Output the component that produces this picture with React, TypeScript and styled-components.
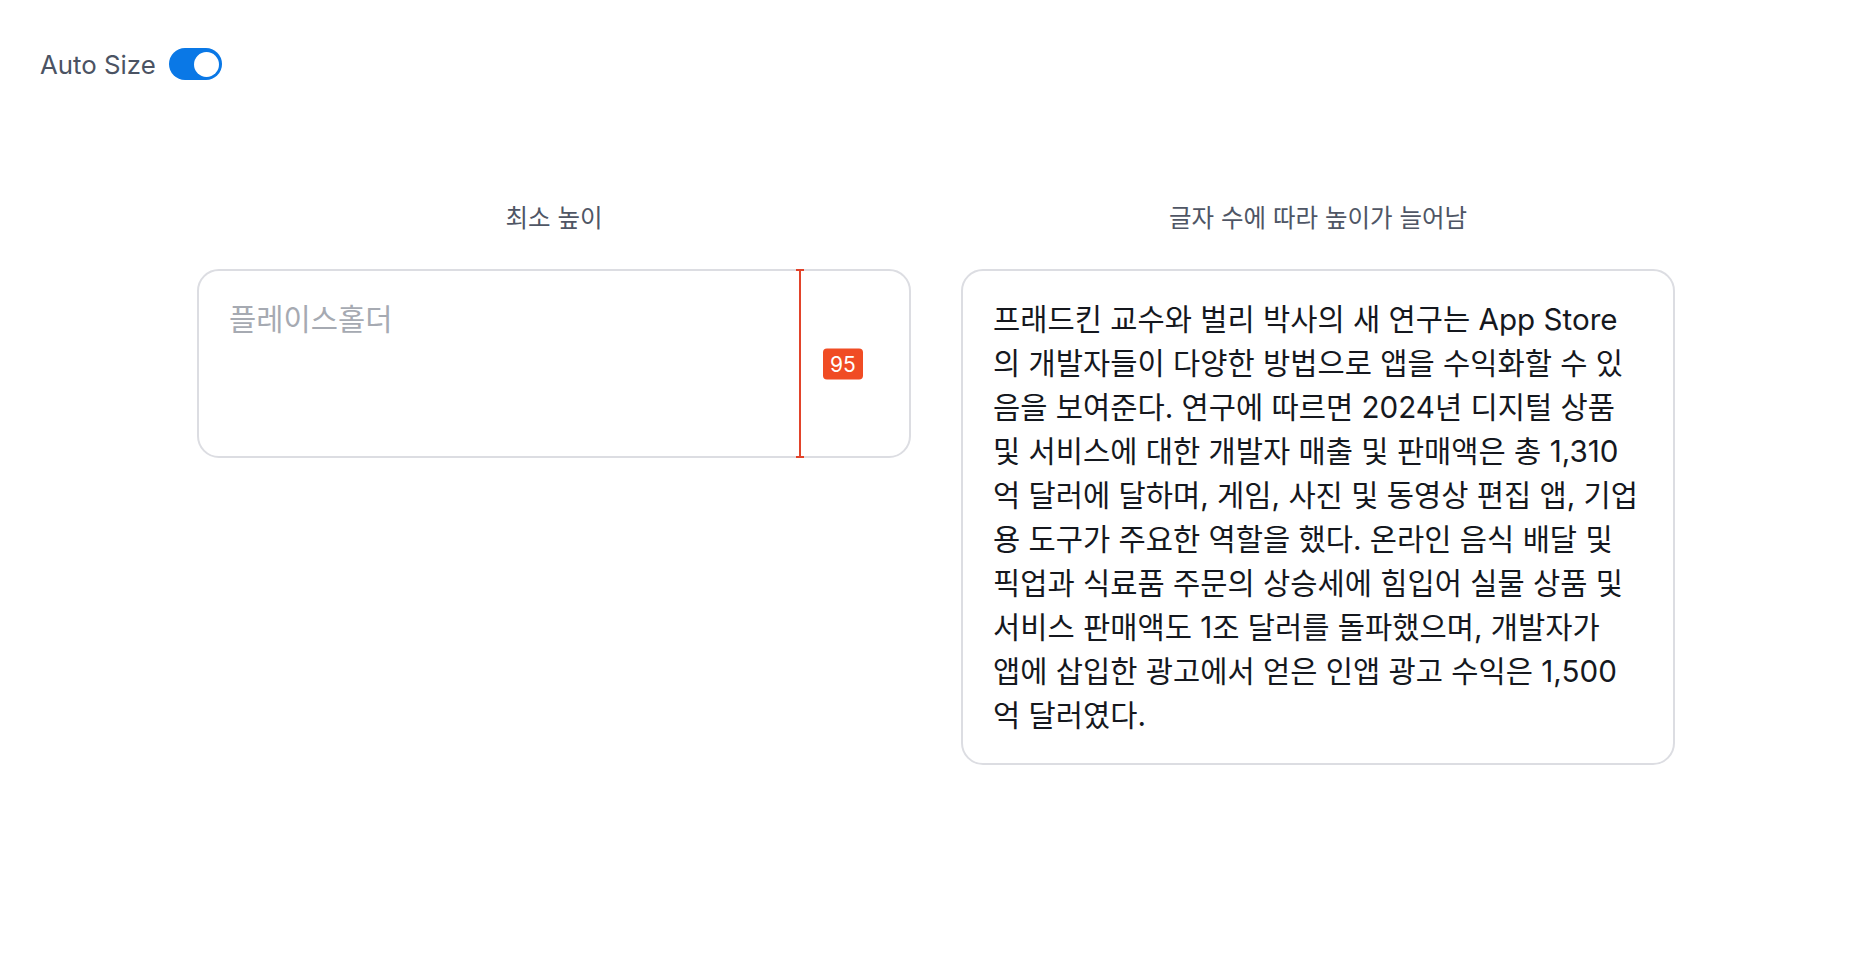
import { useLayoutEffect, useRef, useState } from 'react';
import styled, { createGlobalStyle } from 'styled-components';

const GlobalStyle = createGlobalStyle`
    html, body {
        margin: 0;
        background: #ffffff;
    }
    body {
        font-family: Inter, "Noto Sans CJK KR", sans-serif;
        -webkit-font-smoothing: antialiased;
    }
`;

const ARTICLE = [
    '프래드킨 교수와 벌리 박사의 새 연구는 App Store',
    '의 개발자들이 다양한 방법으로 앱을 수익화할 수 있',
    '음을 보여준다. 연구에 따르면 2024년 디지털 상품',
    '및 서비스에 대한 개발자 매출 및 판매액은 총 1,310',
    '억 달러에 달하며, 게임, 사진 및 동영상 편집 앱, 기업',
    '용 도구가 주요한 역할을 했다. 온라인 음식 배달 및',
    '픽업과 식료품 주문의 상승세에 힘입어 실물 상품 및',
    '서비스 판매액도 1조 달러를 돌파했으며, 개발자가',
    '앱에 삽입한 광고에서 얻은 인앱 광고 수익은 1,500',
    '억 달러였다.',
].join('\n');

const Page = styled.main`
    padding: 48px 40px;
    box-sizing: border-box;
`;

const Toolbar = styled.div`
    display: flex;
    align-items: center;
    gap: 13px;
    height: 32px;
`;

const ToolbarLabel = styled.span`
    font-size: 25.8px;
    color: #4b5363;
`;

const Switch = styled.button<{ $on: boolean }>`
    display: flex;
    justify-content: ${({ $on }) => ($on ? 'flex-end' : 'flex-start')};
    align-items: center;
    width: 53px;
    height: 32px;
    padding: 0 3px;
    border: none;
    border-radius: 16px;
    background: ${({ $on }) => ($on ? '#0a78e6' : '#d1d5db')};
    cursor: pointer;
    box-sizing: border-box;
`;

const Knob = styled.span`
    width: 25px;
    height: 25px;
    border-radius: 50%;
    background: #ffffff;
`;

const Columns = styled.div`
    display: flex;
    justify-content: center;
    gap: 50px;
    margin-top: 123px;
`;

const Column = styled.section`
    display: flex;
    flex-direction: column;
    align-items: center;
    gap: 36px;
    width: 714px;
`;

const Caption = styled.div`
    font-size: 24.5px;
    line-height: 30px;
    color: #4f5665;
`;

const Field = styled.div`
    position: relative;
    width: 100%;
`;

const TextArea = styled.textarea<{ $minHeight: number }>`
    display: block;
    width: 100%;
    min-height: ${({ $minHeight }) => $minHeight}px;
    box-sizing: border-box;
    padding: 26px 30px;
    border: 2px solid #dcdde2;
    border-radius: 22px;
    font-family: Inter, "Noto Sans CJK KR", sans-serif;
    font-size: 29.6px;
    line-height: 44px;
    color: #15181e;
    background: #ffffff;
    resize: none;
    overflow: hidden;
    outline: none;

    &::placeholder {
        color: #a6aab2;
    }
`;

const Ruler = styled.div`
    position: absolute;
    top: 0;
    bottom: 0;
    right: 110px;
    width: 2px;
    background: #e2432a;

    &::before,
    &::after {
        content: '';
        position: absolute;
        left: -3px;
        width: 8px;
        height: 2px;
        background: #e2432a;
    }
    &::before {
        top: 0;
    }
    &::after {
        bottom: 0;
    }
`;

const Badge = styled.span`
    position: absolute;
    top: 50%;
    left: 24px;
    transform: translateY(-50%);
    padding: 0 7px;
    height: 31px;
    border-radius: 4px;
    background: #f04c24;
    color: #ffffff;
    font-size: 21px;
    line-height: 31px;
`;

interface AutoSizeProps {
    minHeight: number;
    placeholder?: string;
    defaultValue?: string;
}

const AutoSizeTextarea = ({ minHeight, placeholder, defaultValue }: AutoSizeProps) => {
    const ref = useRef<HTMLTextAreaElement>(null);

    const fit = () => {
        const el = ref.current;
        if (!el) return;
        el.style.height = 'auto';
        el.style.height = `${el.scrollHeight + 4}px`;
    };

    useLayoutEffect(fit, []);

    return (
        <TextArea
            ref={ref}
            $minHeight={minHeight}
            placeholder={placeholder}
            defaultValue={defaultValue}
            onInput={fit}
        />
    );
};

export default function App() {
    const [autoSize, setAutoSize] = useState(true);

    return (
        <>
            <GlobalStyle />
            <Page>
                <Toolbar>
                    <ToolbarLabel>Auto Size</ToolbarLabel>
                    <Switch
                        role="switch"
                        aria-checked={autoSize}
                        $on={autoSize}
                        onClick={() => setAutoSize(v => !v)}
                    >
                        <Knob />
                    </Switch>
                </Toolbar>

                <Columns>
                    <Column>
                        <Caption>최소 높이</Caption>
                        <Field>
                            <AutoSizeTextarea minHeight={189} placeholder="플레이스홀더" />
                            <Ruler>
                                <Badge>95</Badge>
                            </Ruler>
                        </Field>
                    </Column>
                    <Column>
                        <Caption>글자 수에 따라 높이가 늘어남</Caption>
                        <Field>
                            <AutoSizeTextarea minHeight={189} defaultValue={ARTICLE} />
                        </Field>
                    </Column>
                </Columns>
            </Page>
        </>
    );
}
